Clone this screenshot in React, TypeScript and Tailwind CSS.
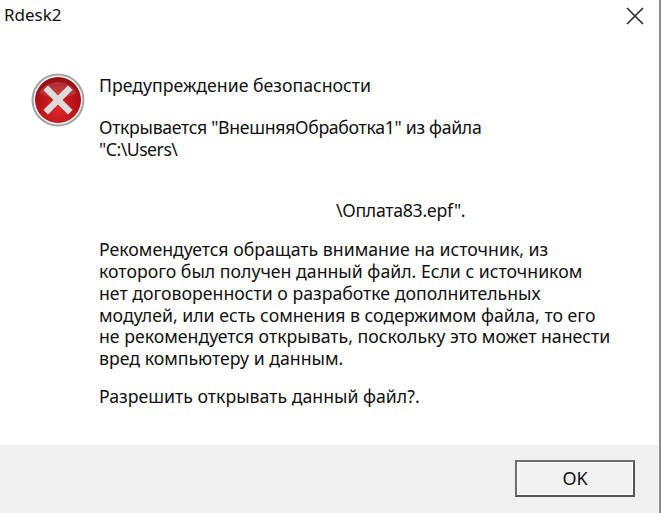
import { X } from "lucide-react";

const font = { fontFamily: '"Noto Sans", "Open Sans", sans-serif' };

function ErrorIcon() {
  return (
    <svg width="54" height="54" viewBox="0 0 54 54" className="shrink-0">
      <defs>
        <radialGradient id="red" cx="50%" cy="70%" r="70%">
          <stop offset="0%" stopColor="#e2242a" />
          <stop offset="55%" stopColor="#bb1419" />
          <stop offset="100%" stopColor="#8f0d12" />
        </radialGradient>
      </defs>
      <circle cx="27" cy="27" r="26.5" fill="#a3a3a3" />
      <circle cx="27" cy="27" r="24.5" fill="#f2f2f2" />
      <circle cx="27" cy="27" r="23" fill="url(#red)" />
      <path d="M8 20 A22 22 0 0 1 46 20 Q27 30 8 20Z" fill="#ffffff" opacity="0.14" />
      <path d="M17 17 L37 37 M37 17 L17 37" stroke="#dcdcdc" strokeWidth="6.5" strokeLinecap="square" />
    </svg>
  );
}

export default function App() {
  return (
    <div className="flex h-[513px] w-[661px] flex-col border-r-2 border-[#8a9092] bg-white text-[#111]" style={font}>
      <div className="flex h-[36px] shrink-0 items-start justify-between">
        <span className="pl-[4px] pt-[3px] text-[17px] leading-[24px]">Rdesk2</span>
        <X className="mr-[9px] mt-[1px] h-[30px] w-[30px] text-[#333]" strokeWidth={1.4} />
      </div>

      <div className="flex flex-1 gap-[14px] pl-[31px] pt-[37px]">
        <ErrorIcon />
        <div className="whitespace-nowrap text-[17.7px] leading-[21.8px]">
          <p className="mb-[20px] mt-[2px]">Предупреждение безопасности</p>
          <p className="tracking-[-0.32px]">Открывается "ВнешняяОбработка1" из файла</p>
          <p className="tracking-[-0.5px]">"C:\Users\</p>
          <p className="mb-[17px] mt-[40px] pl-[237px] tracking-[-0.3px]">\Оплата83.epf".</p>
          <p className="mb-[16px]">
            Рекомендуется обращать внимание на источник, из
            <br />
            которого был получен данный файл. Если с источником
            <br />
            нет договоренности о разработке дополнительных
            <br />
            модулей, или есть сомнения в содержимом файла, то его
            <br />
            не рекомендуется открывать, поскольку это может нанести
            <br />
            вред компьютеру и данным.
          </p>
          <p>Разрешить открывать данный файл?.</p>
        </div>
      </div>

      <div className="flex h-[68px] shrink-0 items-start justify-end bg-[#f0f0f0] pr-[24px] pt-[15px]">
        <button className="h-[37px] w-[120px] border-2 border-[#6e6e6e] border-b-[#555555] border-r-[#555555] bg-[#f2f2f2] text-[18px] text-[#111] shadow-[inset_0_0_0_1px_#ffffff]">
          OK
        </button>
      </div>
    </div>
  );
}
